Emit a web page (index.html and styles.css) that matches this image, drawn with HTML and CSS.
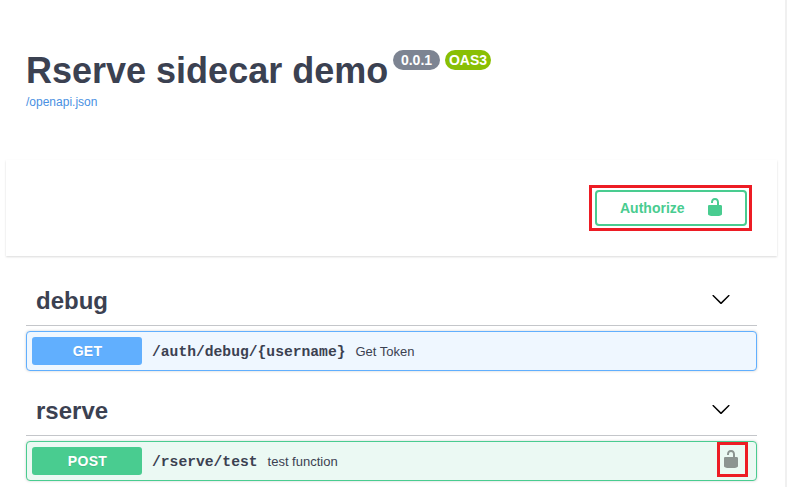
FILE: index.html
```html
<!DOCTYPE html>
<html lang="en">
<head>
<meta charset="utf-8">
<title>Rserve sidecar demo</title>
<link rel="stylesheet" href="styles.css">
</head>
<body>
<svg class="symbols" width="0" height="0">
  <symbol id="unlocked" viewBox="0 0 20 20"><path d="M15.8 8H14V5.6C14 2.703 12.665 1 10 1 7.334 1 6 2.703 6 5.6V6h2v-.801C8 3.754 8.797 3 10 3c1.203 0 2 .754 2 2.199V8H4c-.553 0-1 .646-1 1.199V17c0 .549.428 1.139.951 1.307l1.197.387C5.672 18.861 6.55 19 7.1 19h5.8c.549 0 1.428-.139 1.951-.307l1.196-.387c.524-.167.953-.757.953-1.306V9.199C17 8.646 16.352 8 15.8 8z"/></symbol>
  <symbol id="arrow-down" viewBox="0 0 20 20"><path d="M17.418 6.109c.272-.268.709-.268.979 0s.271.701 0 .969l-7.908 7.83c-.27.268-.707.268-.979 0l-7.908-7.83c-.27-.268-.27-.701 0-.969.271-.268.709-.268.979 0L10 13.25l7.418-7.141z"/></symbol>
</svg>
<div class="page">
  <header class="info">
    <div class="title-row">
      <h1 class="title">Rserve sidecar demo</h1>
      <span class="badge version">0.0.1</span>
      <span class="badge oas">OAS3</span>
    </div>
    <a class="spec-link">/openapi.json</a>
  </header>
  <section class="scheme">
    <div class="highlight">
      <button class="authorize"><span>Authorize</span><svg class="icon"><use href="#unlocked"/></svg></button>
    </div>
  </section>
  <main class="wrapper">
    <section class="tag-section">
      <h2 class="tag"><span>debug</span><svg class="icon"><use href="#arrow-down"/></svg></h2>
      <div class="operation get">
        <span class="method">GET</span>
        <span class="path">/auth/debug/{username}</span>
        <span class="summary">Get Token</span>
      </div>
    </section>
    <section class="tag-section">
      <h2 class="tag"><span>rserve</span><svg class="icon"><use href="#arrow-down"/></svg></h2>
      <div class="operation post">
        <span class="method">POST</span>
        <span class="path">/rserve/test</span>
        <span class="summary">test function</span>
        <span class="highlight lock"><svg class="icon"><use href="#unlocked"/></svg></span>
      </div>
    </section>
  </main>
</div>
</body>
</html>
```

FILE: styles.css
```css
* { box-sizing: border-box; }
html, body { margin: 0; height: 100%; overflow: hidden; }
body {
  font-family: "Liberation Sans", Arial, sans-serif;
  color: #3b4151;
  background: #fff;
}
.symbols { position: absolute; }
.page {
  height: 487px;
  padding: 0 8px 0 6px;
  border-right: 2px solid #f0f0f0;
  overflow: hidden;
}
.icon { display: block; flex: none; width: 20px; height: 20px; }

.info { height: 160px; padding: 50px 20px 0; }
.title-row { display: flex; height: 42px; align-items: flex-start; }
.title { margin: 0 5px 0 0; font-size: 36px; line-height: 41px; white-space: nowrap; width: 362px; }
.badge {
  height: 20px;
  margin-right: 5px;
  border-radius: 10px;
  color: #fff;
  font-size: 14px;
  font-weight: bold;
  line-height: 21px;
  text-align: center;
}
.version { width: 47px; background: #7d8492; }
.oas { width: 46px; background: #89bf04; }
.spec-link { display: block; margin-top: 3px; font-size: 12px; line-height: 14px; color: #4990e2; }

.scheme {
  display: flex;
  justify-content: flex-end;
  align-items: flex-start;
  height: 96px;
  padding: 25px 25px 0 0;
  box-shadow: 0 1px 2px rgba(0, 0, 0, .15);
}
.highlight { border: 3px solid #ed1c24; }
.scheme .highlight { width: 163px; height: 46px; padding: 2px 2px 2px 3px; }
.authorize {
  display: flex;
  align-items: center;
  width: 152px;
  height: 36px;
  padding: 0 20px 0 23px;
  border: 2px solid #49cc90;
  border-radius: 4px;
  background: transparent;
  color: #49cc90;
  font: bold 14px "Liberation Sans", Arial, sans-serif;
  justify-content: space-between;
}
.authorize .icon { fill: #49cc90; margin-top: -2px; }

.wrapper { padding: 20px 20px 0; }
.tag-section { height: 110px; }
.tag {
  display: flex;
  align-items: center;
  justify-content: space-between;
  height: 50px;
  margin: 0 0 5px;
  padding: 0 26px 0 10px;
  border-bottom: 1px solid #c4c6ca;
  font-size: 24px;
  line-height: 28px;
}
.tag .icon { margin-top: -3px; fill: #000; }
.operation {
  display: flex;
  align-items: center;
  height: 40px;
  padding: 0 8px 0 5px;
  border: 1px solid;
  border-radius: 4px;
  box-shadow: 0 0 3px rgba(0, 0, 0, .19);
}
.get { border-color: #61affe; background: #eff7ff; }
.post { border-color: #49cc90; background: #ebf9f3; }
.method {
  width: 110px;
  height: 28px;
  margin-right: 10px;
  border-radius: 3px;
  color: #fff;
  font-size: 14px;
  font-weight: bold;
  letter-spacing: .3px;
  line-height: 28px;
  padding-left: 1px;
  text-align: center;
  text-shadow: 0 1px 0 rgba(0, 0, 0, .1);
}
.get .method { background: #61affe; }
.post .method { background: #49cc90; }
.path { margin-right: 10px; padding-top: 2px; font: bold 14.67px "Liberation Mono", monospace; }
.summary { font-size: 13px; }
.lock { width: 31px; height: 35px; margin: -4px 0 0 auto; padding: 4px 1px; }
.lock .icon { fill: #000; opacity: .4; }
```
